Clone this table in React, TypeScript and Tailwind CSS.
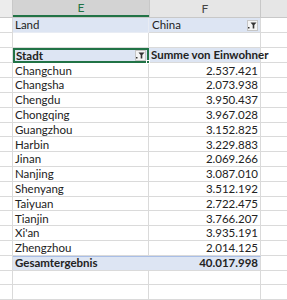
import { ReactNode } from "react";

const cities: [string, string][] = [
  ["Changchun", "2.537.421"],
  ["Changsha", "2.073.938"],
  ["Chengdu", "3.950.437"],
  ["Chongqing", "3.967.028"],
  ["Guangzhou", "3.152.825"],
  ["Harbin", "3.229.883"],
  ["Jinan", "2.069.266"],
  ["Nanjing", "3.087.010"],
  ["Shenyang", "3.512.192"],
  ["Taiyuan", "2.722.475"],
  ["Tianjin", "3.766.207"],
  ["Xi'an", "3.935.191"],
  ["Zhengzhou", "2.014.125"],
];

function FilterButton() {
  return (
    <div className="flex h-[11px] w-[11px] items-center justify-center border border-[#c6c6c6] bg-[#f4f4f4]">
      <svg width="9" height="7" viewBox="0 0 9 7">
        <rect x="0" y="5" width="1.5" height="1.5" fill="#333" />
        <path d="M2.5 0.5 H8.5 L6.3 3 V6.5 H4.7 V3 Z" fill="#333" />
      </svg>
    </div>
  );
}

function Row({
  e,
  f,
  g = true,
  h = "h-[14.8px]",
  top = "",
}: {
  e?: ReactNode;
  f?: ReactNode;
  g?: boolean;
  h?: string;
  top?: string;
}) {
  return (
    <div className={`flex ${h} ${top}`}>
      <div className="w-[13px] shrink-0 border-b border-r border-[#dadada]" />
      {e}
      {f}
      {g && <div className="flex-1 border-b border-[#dadada]" />}
    </div>
  );
}

export default function App() {
  return (
    <div
      className="w-[287px] h-[300px] overflow-hidden bg-white text-[11.5px] leading-none text-[#222]"
      style={{ fontFamily: "Lato, 'Liberation Sans', sans-serif" }}
    >
      {/* column headers */}
      <div className="flex h-[18px] bg-[#e6e6e6] border-b border-[#c8c8c8]">
        <div className="w-[13px] shrink-0 bg-[#ececec] border-r border-[#c8c8c8]" />
        <div className="w-[136px] shrink-0 flex items-center justify-center bg-[#d3d3d3] border-b-2 border-[#217346] text-[#217346] text-[12px]">
          E
        </div>
        <div className="w-[112px] shrink-0 flex items-center justify-center border-x border-[#c8c8c8] text-[#444] text-[12px]">
          F
        </div>
        <div className="flex-1" />
      </div>

      {/* report filter */}
      <Row
        h="h-[15px]"
        e={
          <div className="w-[136px] shrink-0 flex items-center pl-[2px] bg-[#dde5f3] border-b border-r border-[#e8ecf4]">
            Land
          </div>
        }
        f={
          <div className="w-[112px] shrink-0 flex items-center justify-between pl-[3px] pr-[2px] bg-[#dde5f3] border-b border-r border-[#dadada]">
            <span>China</span>
            <FilterButton />
          </div>
        }
      />

      <Row
        h="h-[15px]"
        e={<div className="w-[136px] shrink-0 border-b border-r border-[#dadada]" />}
        f={<div className="w-[112px] shrink-0 border-b border-r border-[#dadada]" />}
      />

      {/* pivot header */}
      <Row
        h="h-[15.4px]"
        e={
          <div className="relative w-[136px] shrink-0 flex items-center justify-between pl-[1px] pr-[1px] bg-[#dde5f3] border-2 border-[#217346] font-bold">
            <span>Stadt</span>
            <FilterButton />
            <div className="absolute -bottom-[3px] -right-[3px] h-[4px] w-[4px] bg-[#217346] border border-white" />
          </div>
        }
        f={
          <div className="w-[112px] shrink-0 flex items-center pl-[2px] bg-[#dde5f3] border-b border-r border-[#dadada] font-bold whitespace-nowrap">
            Summe von Einwohner
          </div>
        }
      />

      {cities.map(([name, value]) => (
        <Row
          key={name}
          e={
            <div className="w-[136px] shrink-0 flex items-center pl-[2px] border-b border-r border-[#dadada]">
              {name}
            </div>
          }
          f={
            <div className="w-[112px] shrink-0 flex items-center justify-end pr-[2px] border-b border-r border-[#dadada]">
              {value}
            </div>
          }
        />
      ))}

      <Row
        e={
          <div className="w-[136px] shrink-0 flex items-center pl-[2px] bg-[#dde5f3] border-t border-[#a9bee6] border-b border-b-[#dadada] font-bold">
            Gesamtergebnis
          </div>
        }
        f={
          <div className="w-[112px] shrink-0 flex items-center justify-end pr-[2px] bg-[#dde5f3] border-t border-[#a9bee6] border-b border-b-[#dadada] border-r border-r-[#dadada] font-bold">
            40.017.998
          </div>
        }
      />

      {[0, 1].map((i) => (
        <Row
          key={i}
          e={<div className="w-[136px] shrink-0 border-b border-r border-[#dadada]" />}
          f={<div className="w-[112px] shrink-0 border-b border-r border-[#dadada]" />}
        />
      ))}
    </div>
  );
}
